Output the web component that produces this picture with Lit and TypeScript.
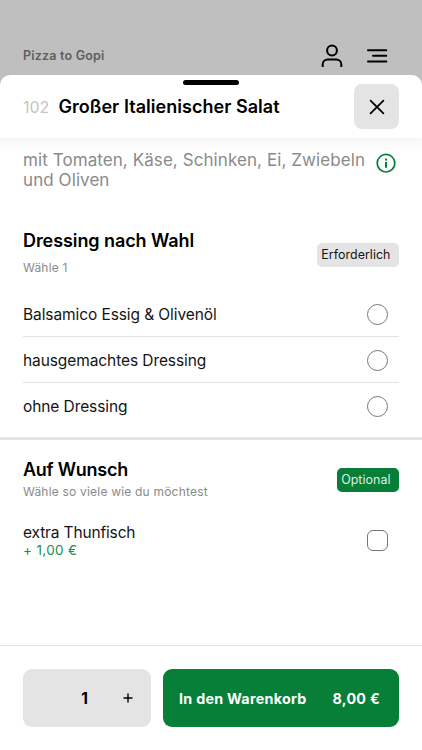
import { LitElement, html, css } from "lit";
import { customElement, state } from "lit/decorators.js";

@customElement("app-root")
export class AppRoot extends LitElement {
  static styles = css`
    :host {
      display: flex;
      flex-direction: column;
      height: 100vh;
      overflow: hidden;
      background: #bfbfbf;
      font-family: Inter, "Liberation Sans", sans-serif;
      color: #141414;
    }
    * { box-sizing: border-box; }
    svg { display: block; fill: none; stroke: currentColor; flex: none; }
    button { font: inherit; color: inherit; border: 0; padding: 0; margin: 0; }
    .topbar {
      height: 75px;
      flex: none;
      padding: 36px 34px 0 23px;
      display: flex;
      align-items: center;
      color: #000;
    }
    .shop {
      flex: 1;
      color: #5e5e5e;
      font-size: 12.5px;
      font-weight: 600;
      letter-spacing: 0.2px;
      line-height: 16px;
    }
    .menu { margin: 1px 0 0 24px; }
    .sheet {
      flex: 1;
      min-height: 0;
      display: flex;
      flex-direction: column;
      background: #fff;
      border-radius: 10px 10px 0 0;
      position: relative;
    }
    .handle {
      position: absolute;
      top: 5px;
      left: 183px;
      width: 56px;
      height: 5px;
      border-radius: 3px;
      background: #000;
    }
    .head {
      height: 63px;
      flex: none;
      padding: 0 23px;
      display: flex;
      align-items: center;
    }
    .num { color: #c4c4c4; font-size: 16px; width: 35.5px; line-height: 20px; }
    .title { flex: 1; font-size: 18px; font-weight: 600; line-height: 22px; color: #000; letter-spacing: 0.04px; white-space: nowrap; }
    .close {
      width: 45px;
      height: 45px;
      border-radius: 8px;
      background: #e4e4e4;
      display: grid;
      place-items: center;
      color: #000;
      padding-left: 1px;
      padding-top: 1px;
    }
    .body {
      flex: 1;
      min-height: 0;
      background: linear-gradient(#f7f7f7, #fff 13px);
      display: flex;
      flex-direction: column;
    }
    .about {
      padding: 12px 26px 0 23px;
      height: 92px;
      flex: none;
      display: flex;
      justify-content: space-between;
      align-items: flex-start;
    }
    .desc { font-size: 17px; line-height: 20px; color: #8a8a8a; letter-spacing: 0.08px; white-space: nowrap; }
    .info { color: #087f38; margin-top: 3px; }
    .grouphead {
      padding: 0 23px;
      display: flex;
      justify-content: space-between;
      align-items: flex-start;
    }
    .name { font-size: 18px; font-weight: 600; line-height: 22px; color: #000; letter-spacing: -0.08px; }
    .optional .name { letter-spacing: -0.25px; }
    .hint { font-size: 12px; line-height: 16px; color: #8a8a8a; letter-spacing: 0.2px; }
    .required .hint { margin-top: 8px; margin-bottom: 1px; }
    .optional .hint { margin-top: 3px; }
    .tag {
      height: 24px;
      margin-top: 13px;
      padding: 0 8.5px 0 4.5px;
      border-radius: 5px;
      font-size: 12.4px;
      letter-spacing: 0.06px;
      line-height: 24px;
      background: #e4e4e4;
      white-space: nowrap;
    }
    .optional .tag { margin-top: 9px; background: #087f38; color: #dff2e5; }
    .options { margin: 14px 23px 0; }
    .option {
      height: 46px;
      padding-right: 11px;
      display: flex;
      align-items: center;
      justify-content: space-between;
      border-bottom: 1px solid #e2e2e2;
      padding-top: 1px;
      font-size: 15.5px;
      letter-spacing: -0.09px;
    }
    .option:last-child { border-bottom: 0; padding-top: 0; }
    .mark { width: 21px; height: 21px; border: 1px solid #777; border-radius: 50%; flex: none; }
    .mark.square { border-radius: 6px; }
    .required { height: 210px; border-bottom: 3px solid #e4e4e4; flex: none; }
    .optional { padding-top: 19px; }
    .extra {
      padding: 23px 34px 0 23px;
      display: flex;
      align-items: center;
      justify-content: space-between;
      font-size: 15.5px;
      line-height: 19px;
      letter-spacing: -0.15px;
    }
    .price { font-size: 13.5px; line-height: 16px; color: #218c4d; letter-spacing: 0.35px; }
    .foot {
      height: 105px;
      flex: none;
      border-top: 1px solid #e2e2e2;
      padding: 23px 23px 23px;
      display: flex;
      gap: 12px;
    }
    .qty {
      width: 128px;
      height: 58px;
      border-radius: 9px;
      background: #e4e4e4;
      color: #000;
      display: grid;
      grid-template-columns: 41px 1fr 46px;
      align-items: center;
      justify-items: center;
    }
    .count { grid-column: 2; font-size: 15.5px; font-weight: 700; }
    .plus { background: none; }
    .cart {
      flex: 1;
      height: 58px;
      border-radius: 9px;
      background: #087f38;
      color: #fff;
      padding: 0 19px 0 16px;
      display: flex;
      align-items: center;
      justify-content: space-between;
      font-size: 14.3px;
      font-weight: 700;
      letter-spacing: 0.28px;
      white-space: nowrap;
    }
  `;

  @state() private count = 1;

  private dressings = ["Balsamico Essig & Olivenöl", "hausgemachtes Dressing", "ohne Dressing"];

  render() {
    return html`
      <header class="topbar">
        <span class="shop">Pizza to Gopi</span>
        <svg width="22" height="24" viewBox="0 0 22 24" stroke-width="2">
          <circle cx="11" cy="6.5" r="4.9" />
          <path d="M1.7 23v-2.4a5 5 0 0 1 5-5h8.6a5 5 0 0 1 5 5V23" />
        </svg>
        <svg class="menu" width="21" height="16" viewBox="0 0 21 16" stroke-width="2" stroke-linecap="round">
          <path d="M1 2.2h18.3M6 7.8h13.3M1 13.5h18.3" />
        </svg>
      </header>
      <main class="sheet">
        <div class="handle"></div>
        <div class="head">
          <span class="num">102</span>
          <span class="title">Großer Italienischer Salat</span>
          <button class="close" aria-label="Schließen">
            <svg width="16" height="16" viewBox="0 0 16 16" stroke-width="1.8" stroke-linecap="round">
              <path d="M1.6 1.6l12.8 12.8M14.4 1.6L1.6 14.4" />
            </svg>
          </button>
        </div>
        <div class="body">
          <div class="about">
            <div class="desc">mit Tomaten, Käse, Schinken, Ei, Zwiebeln<br />und Oliven</div>
            <svg class="info" width="20" height="20" viewBox="0 0 20 20" stroke-width="1.7">
              <circle cx="10" cy="10.2" r="8.8" />
              <path d="M10 8.9v5.8M10 5.6v2" stroke-width="2" />
            </svg>
          </div>
          <section class="required">
            <div class="grouphead">
              <div>
                <div class="name">Dressing nach Wahl</div>
                <div class="hint">Wähle 1</div>
              </div>
              <span class="tag">Erforderlich</span>
            </div>
            <div class="options">
              ${this.dressings.map(
                (d) => html`<div class="option"><span>${d}</span><span class="mark"></span></div>`
              )}
            </div>
          </section>
          <section class="optional">
            <div class="grouphead">
              <div>
                <div class="name">Auf Wunsch</div>
                <div class="hint">Wähle so viele wie du möchtest</div>
              </div>
              <span class="tag">Optional</span>
            </div>
            <div class="extra">
              <div>
                <div>extra Thunfisch</div>
                <div class="price">+ 1,00 €</div>
              </div>
              <span class="mark square"></span>
            </div>
          </section>
        </div>
        <footer class="foot">
          <div class="qty">
            <span class="count">${this.count}</span>
            <button class="plus" aria-label="Mehr" @click=${() => this.count++}>
              <svg width="10" height="10" viewBox="0 0 10 10" stroke-width="1.4">
                <path d="M5 .5v9M.5 5h9" />
              </svg>
            </button>
          </div>
          <button class="cart"><span>In den Warenkorb</span><span>8,00 €</span></button>
        </footer>
      </main>
    `;
  }
}
